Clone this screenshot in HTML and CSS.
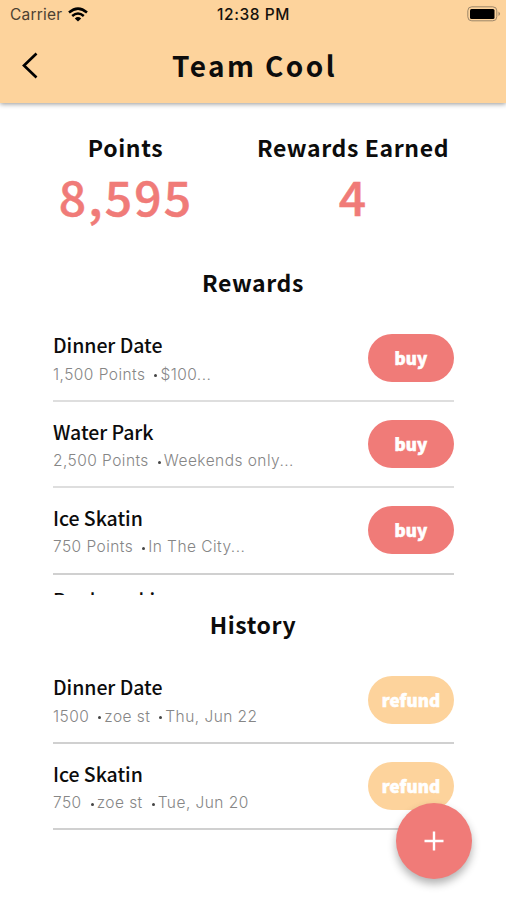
FILE: index.html
```html
<!DOCTYPE html>
<html lang="en">
<head>
<meta charset="utf-8">
<title>Team Cool</title>
<link rel="stylesheet" href="styles.css">
</head>
<body>
<main class="screen">
  <header class="header">
    <div class="status">
      <div class="carrier"><span>Carrier</span>
        <svg class="wifi" viewBox="0 0 20 15"><g fill="none" stroke="#000" stroke-width="2.5"><path d="M1 5.5Q10-2.3 19 5.5"/><path d="M4.2 9Q10 4 15.8 9"/></g><path d="M6.8 11.4Q10 8.8 13.2 11.4L10 14.6Z"/></svg>
      </div>
      <time class="clock">12:38 PM</time>
      <svg class="battery" viewBox="0 0 34 16"><rect x=".8" y=".8" width="29" height="14" rx="4" fill="none" stroke="#9c8669" stroke-width="1"/><rect x="3" y="3" width="24.5" height="10" rx="1.5"/><path d="M31.5 5.5q3 2.3 0 4.6z" fill="#9c8669"/></svg>
    </div>
    <div class="navbar">
      <svg class="back" viewBox="0 0 16 28"><path d="M14.5 2.5L2 14.5l12.5 12" fill="none" stroke="#000" stroke-width="2.7"/></svg>
      <h1 class="title">Team Cool</h1>
    </div>
  </header>
  <section class="stats">
    <div class="stat points"><h2 class="heading">Points</h2><p class="number">8,595</p></div>
    <div class="stat earned"><h2 class="heading">Rewards Earned</h2><p class="number">4</p></div>
  </section>
  <section class="rewards">
    <h2 class="heading">Rewards</h2>
    <ul class="list">
      <li class="row thick"><div><h3 class="name">Dinner Date</h3><p class="meta"><span>1,500 Points</span><i class="dot"></i><span>$100...</span></p></div><button class="pill">buy</button></li>
      <li class="row thick"><div><h3 class="name">Water Park</h3><p class="meta"><span>2,500 Points</span><i class="dot"></i><span>Weekends only...</span></p></div><button class="pill">buy</button></li>
      <li class="row"><div><h3 class="name">Ice Skatin</h3><p class="meta"><span>750 Points</span><i class="dot"></i><span>In The City...</span></p></div><button class="pill">buy</button></li>
      <li class="row peek"><h3 class="name">Bookmarking</h3></li>
    </ul>
  </section>
  <section class="history">
    <h2 class="heading">History</h2>
    <ul class="list">
      <li class="row"><div><h3 class="name">Dinner Date</h3><p class="meta"><span>1500</span><i class="dot"></i><span>zoe st</span><i class="dot"></i><span>Thu, Jun 22</span></p></div><button class="pill refund">refund</button></li>
      <li class="row"><div><h3 class="name">Ice Skatin</h3><p class="meta"><span>750</span><i class="dot"></i><span>zoe st</span><i class="dot"></i><span>Tue, Jun 20</span></p></div><button class="pill refund">refund</button></li>
    </ul>
  </section>
  <button class="fab" aria-label="Add"><svg viewBox="0 0 20 20"><path d="M10 .5v19M.5 10h19" stroke="#fff" stroke-width="2.4"/></svg></button>
</main>
</body>
</html>
```
FILE: styles.css
```css
* { box-sizing: border-box; margin: 0; padding: 0; }
body { background: #fff; color: #0c0c0c; font-family: "Noto Sans CJK JP", sans-serif; }
.screen { position: relative; width: 506px; height: 900px; overflow: hidden; background: #fff; }
.header { height: 103px; background: #fdd39c; box-shadow: 0 1px 5px rgba(0,0,0,.42); }
.status { display: grid; grid-template-columns: 1fr auto 1fr; height: 29px; padding: 0 5px 0 10px; align-items: center; font: 400 15.5px/28px Inter, sans-serif; }
.carrier { display: flex; align-items: center; gap: 6px; color: #4d4132; letter-spacing: .2px; }
.wifi { width: 20px; height: 15px; }
.clock { font-weight: 500; letter-spacing: .55px; color: #15110c; margin-left: -4px; }
.battery { width: 34px; height: 16px; justify-self: end; margin-top: -1px; }
.navbar { display: grid; grid-template-columns: 60px 1fr 60px; height: 72px; align-items: center; }
.back { width: 16px; height: 28px; margin-left: 22px; }
.title { text-align: center; font-size: 28px; line-height: 40px; font-weight: 700; letter-spacing: 2.4px; padding-left: 3px; }
.stats { display: grid; grid-template-columns: 251px 204px; height: 153px; padding-top: 27px; }
.stat { text-align: center; }
.heading { font-size: 23px; line-height: 34px; font-weight: 700; letter-spacing: .6px; text-align: center; white-space: nowrap; }
.number { font-size: 48px; line-height: 62px; font-weight: 500; letter-spacing: 2.2px; padding-left: 1px; color: #f07b78; -webkit-text-stroke: .5px #f07b78; }
.rewards { height: 339px; overflow: hidden; padding-top: 9px; }
.list { list-style: none; margin: 16.5px 52px 0 53px; }
.row { display: flex; justify-content: space-between; align-items: center; height: 86.4px; border-bottom: 2px solid #d0d0d0; }
.thick { border-bottom-color: #dedede; }
.peek { align-items: flex-start; padding-top: 8px; }
.name { font-size: 19.5px; line-height: 28px; font-weight: 500; letter-spacing: -.05px; padding-top: 3px; }
.meta { display: flex; align-items: center; height: 28px; padding-top: 3px; color: #868686; font: 300 15.5px/28px Inter, sans-serif; letter-spacing: .45px; white-space: nowrap; }
.dot { width: 3px; height: 3px; border-radius: 50%; background: #444; margin: 2px 3px 0 9px; }
.pill { width: 86px; height: 48px; border: 0; border-radius: 24px; background: #f07b78; color: #fff; font: 900 17px/48px "Noto Sans CJK JP", sans-serif; letter-spacing: .1px; -webkit-text-stroke: .6px #fff; }
.refund { background: #fdd39c; }
.history { padding-top: 12px; }
.fab { position: absolute; left: 396px; top: 803px; width: 76px; height: 76px; display: grid; place-items: center; border: 0; border-radius: 50%; background: #f07b78; box-shadow: 0 5px 9px rgba(0,0,0,.3); }
.fab svg { width: 20px; height: 20px; }
```
